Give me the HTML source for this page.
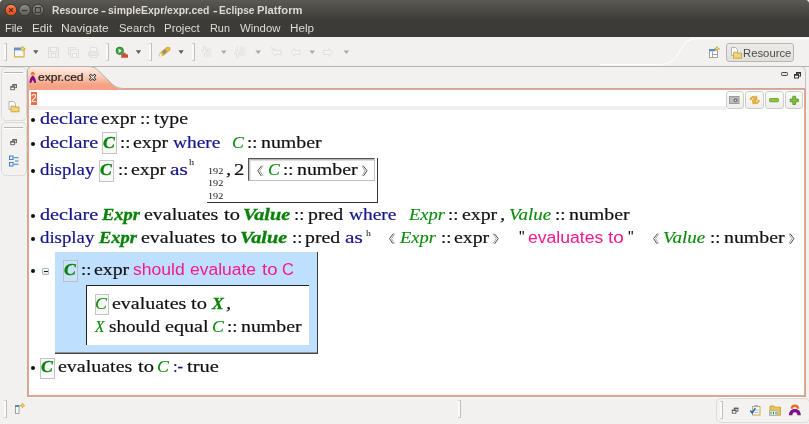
<!DOCTYPE html>
<html><head><meta charset="utf-8"><title>Resource - simpleExpr/expr.ced - Eclipse Platform</title>
<style>
html,body{margin:0;padding:0}
body{width:809px;height:424px;position:relative;overflow:hidden;background:#f2f1f0;font-family:"Liberation Sans",sans-serif}
div{position:absolute;box-sizing:border-box}
.t{position:absolute;white-space:pre;transform-origin:0 0;display:block}
.S,.K{-webkit-text-stroke:0.2px currentColor}
.GB{-webkit-text-stroke:0.3px currentColor}
.tab{-webkit-text-stroke:0.2px currentColor}
.GI{-webkit-text-stroke:0.12px currentColor}
.S{font:normal normal 17px "Liberation Serif",serif;line-height:20px;color:#111}
.K{font:normal normal 17px "Liberation Serif",serif;line-height:20px;color:#14148c}
.GI{font:italic normal 17px "Liberation Serif",serif;line-height:20px;color:#0a8a0a}
.GB{font:italic bold 17px "Liberation Serif",serif;line-height:20px;color:#078207}
.P{font:normal normal 16px "Liberation Sans",sans-serif;line-height:20px;color:#f5198c}
.Q{font:normal normal 16px "Liberation Sans",sans-serif;line-height:20px;color:#111}
.h{font:normal normal 8px "Liberation Serif",serif;line-height:20px;color:#111}
.n{font:normal normal 8.5px "Liberation Serif",serif;line-height:20px;color:#111}
.T{font:normal bold 10.2px "Liberation Sans",sans-serif;line-height:20px;color:#dfdbd2}
.M{font:normal normal 10px "Liberation Sans",sans-serif;line-height:20px;color:#dfdbd2}
.tab{font:normal normal 10.5px "Liberation Sans",sans-serif;line-height:20px;color:#222}
.R{font:normal normal 10.5px "Liberation Sans",sans-serif;line-height:20px;color:#4c4c4c}
.two{font:normal normal 10.5px "Liberation Sans",sans-serif;line-height:20px;color:#fff}

#title{left:0;top:0;width:809px;height:23px;background:linear-gradient(#5a5953,#4b4a45 45%,#3e3d39 85%,#3c3b37)}
#menu{left:0;top:23px;width:809px;height:14px;background:#3c3b37}
#tbline{left:0;top:66px;width:809px;height:1px;background:#b4b2af}
.trim{border:1px solid #dddbd8;border-radius:5px;background:#f3f2f1}
.hl{height:1px;background:#b9b7b4;border-bottom:1px solid #fff;box-sizing:content-box}
.vh{width:3px;box-sizing:border-box;border-right:1px solid #c0bebb;border-top:1px solid #d0cecb;border-bottom:1px solid #d0cecb;background:#fafaf9}
#edsh{left:27px;top:89px;width:779px;height:308px;border:1px solid #c6a99b;border-top:none}
#editor{left:28px;top:89px;width:777px;height:307px;background:#fff;border:1px solid #f4a283}
#edhl{left:27px;top:397px;width:779px;height:1px;background:#fafafa}
#band{left:29px;top:106px;width:697px;height:4px;background:#efefef}
.cb{border:1px solid #c4c4c4;background:#f9f9f9}
.bul{width:4.2px;height:4.2px;border-radius:50%;background:#111}
.mb{border:1px solid #cfcdca;border-radius:3px;background:linear-gradient(#fbfbfa,#efeeec)}
svg{position:absolute;left:0;top:0}
</style></head><body>
<div id="title"></div><div id="menu"></div>
<div id="tbline"></div>
<!-- toolbar handles -->
<div class="vh" style="left:4px;top:43px;height:18px"></div>
<div class="vh" style="left:106px;top:43px;height:18px"></div>
<div class="vh" style="left:149px;top:43px;height:18px"></div>
<div class="vh" style="left:191.500px;top:43px;height:18px"></div>
<!-- perspective button -->
<div style="left:726px;top:43px;width:68px;height:19px;border:1px solid #b9b6b2;border-radius:3px;background:linear-gradient(#eeece9,#e1dfdb)"></div>
<!-- left trims -->
<div class="trim" style="left:1px;top:67px;width:26px;height:54px"></div>
<div class="hl" style="left:4px;top:72px;width:19px"></div>
<div class="trim" style="left:1px;top:122px;width:26px;height:54px"></div>
<div class="hl" style="left:4px;top:127px;width:19px"></div>
<!-- editor -->
<div id="edsh"></div><div id="edhl"></div><div id="editor"></div>
<div id="band"></div>
<div style="left:31px;top:92px;width:6px;height:13px;background:#ea6f48"></div>
<div class="mb" style="left:726px;top:91px;width:18px;height:18px"></div>
<div class="mb" style="left:745px;top:91px;width:19px;height:18px"></div>
<div class="mb" style="left:765px;top:91px;width:19px;height:18px"></div>
<div class="mb" style="left:785px;top:91px;width:18px;height:18px"></div>
<!-- bullets -->
<div class="bul" style="left:30.75px;top:117.65px"></div>
<div class="bul" style="left:30.75px;top:141.65px"></div>
<div class="bul" style="left:30.75px;top:168.65px"></div>
<div class="bul" style="left:30.75px;top:213.65px"></div>
<div class="bul" style="left:30.75px;top:236.65px"></div>
<div class="bul" style="left:31.25px;top:268.55px"></div>
<div class="bul" style="left:30.75px;top:365.65px"></div>
<!-- C boxes -->
<div class="cb" style="left:102px;top:132px;width:15px;height:22px"></div>
<div class="cb" style="left:99px;top:160px;width:15px;height:22px"></div>
<!-- line3 big box: bottom/right borders -->
<div style="left:207px;top:158px;width:171px;height:45px;border-right:1px solid #333;border-bottom:1px solid #333"></div>
<div style="left:248px;top:158px;width:127px;height:23px;border-top:1px solid #555;border-left:1px solid #555;border-bottom:1px solid #bdbdbd;border-right:1px solid #c6c6c6;background:#fff"></div>
<div style="left:249px;top:159px;width:125px;height:21px;border-top:1px solid #b4b4b4;border-left:1px solid #c4c4c4"></div><div style="left:250px;top:160px;width:124px;height:20px;border-top:1px solid #dedede;border-left:1px solid #e6e6e6"></div>
<!-- blue block -->
<div style="left:55px;top:252px;width:263px;height:102px;background:#bfdfff;border-right:1px solid #3a3a3a;border-bottom:1px solid #444"></div><div style="left:55px;top:352px;width:262px;height:1px;background:#8f9296"></div>
<div class="cb" style="left:63px;top:260px;width:15px;height:22px;background:#c9e2fb;border-color:#b9bfc6"></div>
<div style="left:86px;top:285px;width:223px;height:59.5px;background:#fff;border-left:1px solid #222;border-top:1px solid #222"></div>
<div class="cb" style="left:94.5px;top:294px;width:14.5px;height:21px"></div>
<div class="cb" style="left:40px;top:358px;width:14.5px;height:21px"></div>
<!-- collapse icon -->
<div style="left:42px;top:268px;width:7px;height:7px;border:1px solid #a3b9d6;border-radius:1px;background:linear-gradient(#fff,#e4e4e4)"></div>
<div style="left:43.500px;top:270.500px;width:4px;height:1.800px;background:#1c1c1c"></div>
<!-- status trims -->
<div class="vh" style="left:4px;top:400px;height:18px"></div>
<div class="vh" style="left:458px;top:400px;height:18px"></div>
<div class="trim" style="left:716px;top:398px;width:94px;height:25px"></div>
<div class="vh" style="left:720px;top:401px;height:18px"></div>
<svg width="809" height="424" viewBox="0 0 809 424">
<defs>
<linearGradient id="gclose" x1="0" y1="0" x2="0" y2="1"><stop offset="0" stop-color="#f58a5c"/><stop offset="0.5" stop-color="#ec5e2a"/><stop offset="1" stop-color="#e2501c"/></linearGradient>
<linearGradient id="ggray" x1="0" y1="0" x2="0" y2="1"><stop offset="0" stop-color="#8c8b85"/><stop offset="1" stop-color="#5f5e59"/></linearGradient>
<linearGradient id="gtab" x1="0" y1="0" x2="0" y2="1"><stop offset="0" stop-color="#fdeee6"/><stop offset="0.4" stop-color="#f9cfbb"/><stop offset="0.72" stop-color="#f5a98c"/><stop offset="0.8" stop-color="#f4a283"/><stop offset="1" stop-color="#f4a283"/></linearGradient>
<g id="dd"><path d="M0.100 0h5.400l-2.700 3.700z" fill="#606060"/></g>
<g id="ddl"><path d="M0 0h5.6l-2.8 3.6z" fill="#a9a9a9"/></g>
<g id="restore" fill="none" stroke="#5c5c5c" stroke-width="0.9"><rect x="2.500" y="0.700" width="3.600" height="3" fill="#f6f6f6"/><path d="M2.100 0.900h4.400" stroke-width="1.300"/><rect x="0.500" y="2.700" width="3.600" height="3" fill="#fff"/><path d="M0.100 2.900h4.400" stroke-width="1.300"/></g>
<g id="lb" fill="none" stroke="#4c4c4c" stroke-width="1"><path d="M4.700 0.400L0.800 5.400L4.300 10.600"/><path d="M6.100 0.500L2.800 5.400L5.900 10.500" stroke-width="0.600" stroke="#707070"/></g>
<g id="rb" fill="none" stroke="#4c4c4c" stroke-width="1"><path d="M1.500 0.400L5.400 5.400L1.900 10.600"/><path d="M0.100 0.500L3.400 5.400L0.300 10.500" stroke-width="0.600" stroke="#707070"/></g>
<g id="fig"><path d="M1.300 3.600C1.100 1.300 2 0 3 0S4.900 1.300 4.700 3.600C4 2.700 3.500 2.500 3 2.500S2 2.700 1.300 3.600Z" fill="#f26a1b"/><path d="M3 3.300C1.500 4.600 0.200 6.500 0.100 10.600L1.500 10.800L3 7.800L4.500 10.800L5.900 10.600C5.800 6.500 4.500 4.600 3 3.300Z" fill="#7d0e8c"/></g>
</defs>
<!-- window corner -->
<path d="M0 0h3C1.3 0.3 0.3 1.3 0 3z" fill="#f2f1f0"/>
<path d="M809 0h-3c1.7 0.3 2.7 1.3 3 3z" fill="#f2f1f0"/>
<!-- window buttons -->
<circle cx="11" cy="10" r="6.1" fill="#33322e"/><circle cx="11" cy="10" r="5.3" fill="url(#gclose)"/>
<path d="M9.1 8.1l3.8 3.8M12.9 8.1l-3.8 3.8" stroke="#5e2a12" stroke-width="1.3"/>
<circle cx="24.6" cy="10" r="6.1" fill="#33322e"/><circle cx="24.6" cy="10" r="5.3" fill="url(#ggray)"/>
<path d="M22 10.5h5.2" stroke="#3a3935" stroke-width="1.3"/>
<circle cx="37.9" cy="10" r="6.1" fill="#33322e"/><circle cx="37.9" cy="10" r="5.3" fill="url(#ggray)"/>
<rect x="35.4" y="7.6" width="5" height="4.8" fill="#77766f" stroke="#3a3935" stroke-width="1.1"/>
<!-- toolbar curve -->
<path d="M600 64.5H659C670 64.5 674 60 678 54C683 46 686 38.7 696 38.7H809" fill="none" stroke="#fdfdfd" stroke-width="1.2"/>
<!-- new icon -->
<rect x="14.5" y="48.2" width="9.6" height="8.6" fill="#f4f8fd" stroke="#b9a561" stroke-width="1"/>
<rect x="14" y="47.7" width="7.5" height="2.6" fill="#5b93d4"/>
<path d="M24.3 51v6h-10" fill="none" stroke="#e9c84e" stroke-width="1"/>
<path d="M22.6 46.3l0.9 1.7l1.8 0.8l-1.8 0.8l-0.9 1.7l-0.9-1.7l-1.8-0.8l1.8-0.8z" fill="#f8dc6a" stroke="#cf9a1c" stroke-width="0.7"/>
<use href="#dd" x="33" y="50.2"/>
<!-- save (disabled) -->
<g fill="none" stroke="#dedede" stroke-width="1"><rect x="48.5" y="47.5" width="10" height="10" fill="#eeeeee"/><rect x="50.5" y="47.5" width="6" height="4" fill="#f4f4f4"/><rect x="51.5" y="53.5" width="4" height="4" fill="#f4f4f4"/></g>
<g fill="none" stroke="#e0e0e0" stroke-width="1"><rect x="68.5" y="47.5" width="7" height="7" fill="#efefef"/><rect x="70.5" y="49.5" width="8" height="8" fill="#efefef"/><rect x="72.5" y="53.5" width="4" height="4" fill="#f5f5f5"/></g>
<g fill="none" stroke="#e0e0e0" stroke-width="1"><rect x="90.5" y="47.5" width="6" height="4" fill="#f4f4f4"/><rect x="88.5" y="51.5" width="10" height="4.5" rx="1" fill="#e8e8e8"/><rect x="90.5" y="55.5" width="6" height="2" fill="#f4f4f4"/></g>
<!-- run ext tools -->
<circle cx="119.800" cy="50.800" r="3.700" fill="#3aa640" stroke="#1f7f28" stroke-width="0.800"/>
<path d="M118.600 48.700l3.200 2.100l-3.200 2.100z" fill="#fff"/>
<path d="M121.3 54.2h1.3v-1.4h3v1.4h1.6c0.5 0 0.8 0.3 0.8 0.8v2.7h-6.8z" fill="#c9502c"/>
<use href="#dd" x="135.7" y="50.2"/>
<!-- marker -->
<path d="M159 56l1.5-3.2l6.3-5.6l2.9 0.2l0.3 2.6l-6.4 5.3z" fill="#edb92e" stroke="#c88a12" stroke-width="0.6"/>
<path d="M161.8 51.8l3-2.7l2.4 2.5l-3 2.6z" fill="#8f8f8f"/>
<path d="M159 56.3l1.4-3l2 2.2z" fill="#fff8e0"/>
<use href="#dd" x="178.3" y="50.2"/>
<!-- disabled annotations nav -->
<g fill="none" stroke="#dcdcdc" stroke-width="0.9">
<rect x="206" y="47.5" width="5.5" height="9.5" fill="#e9e9e9" stroke="none"/>
<path d="M203.5 46.5h2v4h2l-3 4l-3-4h2z" fill="#f3f3f3"/><path d="M204.5 54.5v2.5"/>
<rect x="240" y="46.5" width="5.5" height="9.5" fill="#e9e9e9" stroke="none"/>
<path d="M238.5 57.5h-2v-4h-2l3-4l3 4h-2z" fill="#f3f3f3"/><path d="M237.5 46.5v1.5"/>
<path d="M275.5 50.5h5.5v4h-5.5v2l-3.5-4l3.5-4z" fill="#f3f3f3"/><path d="M271 47l1 1.3l1.5 0.4l-1.5 0.5l-1 1.3" />
<path d="M294.500 50.500h5.500v4h-5.500v2l-4-4l4-4z" fill="#f3f3f3"/>
<path d="M329 50.500h-5.500v4h5.500v2l4-4l-4-4z" fill="#f3f3f3"/>
</g>
<use href="#ddl" x="221" y="50.4"/><use href="#ddl" x="255.400" y="50.4"/><use href="#ddl" x="309.400" y="50.4"/><use href="#ddl" x="343.600" y="50.4"/>
<!-- open perspective -->
<rect x="709.500" y="49.500" width="8" height="8" fill="#fff" stroke="#9a9a9a" stroke-width="0.9"/>
<rect x="709" y="49" width="6.500" height="2.300" fill="#4f8fd6"/>
<path d="M712.500 51.500v6M712.500 54.500h5" stroke="#9a9a9a" stroke-width="0.9"/>
<path d="M717 46.500l0.800 1.600l1.700 0.700l-1.700 0.700l-0.800 1.600l-0.800-1.600l-1.700-0.700l1.700-0.700z" fill="#f8dc6a" stroke="#cf9a1c" stroke-width="0.700"/>
<!-- resource icon -->
<path d="M731.500 47.500h4l2 2v6h-6z" fill="#fdfdfd" stroke="#9aa3b3" stroke-width="0.8"/>
<path d="M733.500 52.300h3l0.800 0.900h4.200v5h-8z" fill="#f3d57a" stroke="#c79a2a" stroke-width="0.8"/>
<!-- tab -->
<path d="M28 90V71c0-3 1.500-4.500 4.500-4.500H89C94 66.500 97 69 100 72.200L110 82C113.500 85.500 116.500 89 124.500 89H805V90z" fill="url(#gtab)"/>
<path d="M27.500 90V71c0-3 1.500-4.500 4.500-4.500H89C94 66.500 97 69 100 72.200L110 82C113.500 85.500 116.500 88.500 124.500 88.500H805" fill="none" stroke="#b3b1ae" stroke-width="1"/>
<rect x="28" y="89" width="777" height="1" fill="#f4a283"/>
<path d="M799 66.500c4.500 0 6.500 2 6.500 6.500V89" fill="none" stroke="#c4c2bf" stroke-width="1"/>
<use href="#fig" transform="translate(29.400,71.800) scale(1.130,1.030)"/>
<path d="M90.800 75.600l3.600 3.600M94.400 75.600l-3.600 3.600" stroke="#1e1e1e" stroke-width="2.700" stroke-linecap="square"/><path d="M90.800 75.600l3.600 3.600M94.400 75.600l-3.600 3.600" stroke="#fff" stroke-width="1.200" stroke-linecap="square"/>
<!-- min/max -->
<rect x="781.500" y="72.500" width="6" height="3" rx="0.800" fill="#e8e8e8" stroke="#444" stroke-width="1"/>
<g fill="#fff" stroke="#333" stroke-width="1"><rect x="796.500" y="72.500" width="4" height="3.500"/><rect x="794.500" y="74.500" width="4" height="3.500"/></g><path d="M796.500 73h4M794.500 75h4" stroke="#333" stroke-width="1.600"/>
<!-- left trim icons -->
<use href="#restore" x="10.300" y="84"/><use href="#restore" x="10.300" y="139"/>
<path d="M9 101.500h4.500l2 2v6h-6.500z" fill="#fdfdfd" stroke="#9aa3b3" stroke-width="0.8"/>
<path d="M11 106h3l0.800 1h4.200v4.800h-8z" fill="#f3d57a" stroke="#c79a2a" stroke-width="0.8"/>
<g fill="#eaf3fc" stroke="#3d7fc4" stroke-width="1"><rect x="9.500" y="156" width="3.500" height="3.500"/><rect x="9.500" y="162.500" width="3.500" height="3.500"/></g>
<path d="M13.500 157.700h5M13.500 164.200h5M15 161h3.500" stroke="#3d7fc4" stroke-width="1.100"/>
<!-- mini toolbar icons -->
<rect x="729.500" y="96.500" width="9.500" height="7" fill="#bdbdbd" stroke="#9a9a9a" stroke-width="1"/><circle cx="735.500" cy="100.300" r="2" fill="#6a6a6a"/><circle cx="735.500" cy="100.300" r="0.900" fill="#e0e0e0"/>
<path d="M750 99.500c0.500-3 3.500-4 5.500-2.500l1-1.200l0.700 4l-4 -0.300l1.100-1.200c-1.200-0.900-2.500-0.400-2.800 1.200z" fill="#f0b429" stroke="#c98a10" stroke-width="0.500"/>
<path d="M759.500 100.500c-0.500 3-3.500 4-5.500 2.500l-1 1.200l-0.700-4l4 0.300l-1.100 1.200c1.200 0.900 2.500 0.400 2.800-1.200z" fill="#f0b429" stroke="#c98a10" stroke-width="0.500"/>
<rect x="769.500" y="98.500" width="9" height="3.300" rx="0.800" fill="#8fc43c" stroke="#5f9a24" stroke-width="0.800"/>
<path d="M792.800 96.300h2.800v2.700h2.700v2.800h-2.700v2.700h-2.800v-2.700h-2.700v-2.800h2.700z" fill="#7fbf3a" stroke="#4f9422" stroke-width="0.800"/>
<!-- brackets -->
<use href="#lb" x="257" y="165.300"/><use href="#rb" x="361.600" y="165.300"/>
<use href="#lb" x="388.700" y="233.200"/><use href="#rb" x="492.800" y="233.200"/>
<use href="#lb" x="652.800" y="233.200"/><use href="#rb" x="788.500" y="233.200"/>
<!-- status icons -->
<rect x="15.500" y="405.500" width="3.500" height="8" fill="#fff" stroke="#8a8a8a" stroke-width="0.800"/><rect x="15" y="405" width="4.300" height="2" fill="#4f8fd6"/>
<path d="M22.500 403.300l0.700 1.500l1.600 0.700l-1.600 0.700l-0.700 1.500l-0.700-1.500l-1.600-0.700l1.600-0.700z" fill="#f8dc6a" stroke="#cf9a1c" stroke-width="0.700"/>
<use href="#restore" x="731.800" y="407.500"/>
<rect x="752.500" y="406.500" width="7.500" height="8.500" fill="#fbfbfb" stroke="#c9a54a" stroke-width="1"/><rect x="754.500" y="405" width="3.500" height="2.200" fill="#8fb0d8"/><path d="M754.500 410h4M754.500 412.500h4" stroke="#9ab" stroke-width="0.800"/>
<path d="M750.300 410.500l2 2.500l3-4.800" fill="none" stroke="#1d62c4" stroke-width="1.500"/>
<path d="M770 406h4l1 1.200h5.500v8h-10.500z" fill="#e9c25a" stroke="#c39a2c" stroke-width="0.800"/><rect x="769.500" y="411" width="8" height="4.500" fill="#f4f7fb" stroke="#8a9bb5" stroke-width="0.600"/><path d="M771 412v2.500M773.500 412v2.500M776 412v2.500" stroke="#2a7a3a" stroke-width="1"/>
<path d="M790.600 408.500C790.600 405.500 792.500 404.400 794.900 404.400C797.300 404.400 799.200 405.500 799.200 408.500L797 408.800C796.600 407.400 795.800 407 794.900 407C794 407 793.200 407.400 792.800 408.800Z" fill="#f26a1b"/>
<path d="M789 415.300C789 411 791.500 408.900 794.900 408.900C798.300 408.900 800.800 411 800.800 415.300L797.400 415.300C797.400 413.200 796.400 412.300 794.900 412.300C793.400 412.300 792.400 413.200 792.400 415.300Z" fill="#7d0e8c"/>

</svg>
<div id="txt" style="left:0;top:0;width:809px;height:424px;will-change:transform">
<span class="t T" style="left:51.85px;top:1.00px;transform:scaleX(1.0033)">Resource</span>
<span class="t T" style="left:101.24px;top:1.00px;transform:scaleX(1.5200)">-</span>
<span class="t T" style="left:108.49px;top:1.00px;transform:scaleX(1.0235)">simpleExpr/expr.ced</span>
<span class="t T" style="left:212.72px;top:1.00px;transform:scaleX(1.3600)">-</span>
<span class="t T" style="left:219.15px;top:1.00px;transform:scaleX(0.9942)">Eclipse</span>
<span class="t T" style="left:257.07px;top:1.00px;transform:scaleX(1.1000)">Platform</span>
<span class="t M" style="left:4.78px;top:19.00px;transform:scaleX(1.0933)">File</span>
<span class="t M" style="left:31.52px;top:19.00px;transform:scaleX(1.1697)">Edit</span>
<span class="t M" style="left:61.39px;top:19.00px;transform:scaleX(1.2105)">Navigate</span>
<span class="t M" style="left:118.83px;top:19.00px;transform:scaleX(1.1344)">Search</span>
<span class="t M" style="left:163.74px;top:19.00px;transform:scaleX(1.1475)">Project</span>
<span class="t M" style="left:210.38px;top:19.00px;transform:scaleX(1.0882)">Run</span>
<span class="t M" style="left:240.30px;top:19.00px;transform:scaleX(1.1380)">Window</span>
<span class="t M" style="left:290.43px;top:19.00px;transform:scaleX(1.1641)">Help</span>
<span class="t tab" style="left:38.23px;top:66.50px;transform:scaleX(1.1481)">expr.ced</span>
<span class="t R" style="left:743.09px;top:42.80px;transform:scaleX(1.0766)">Resource</span>
<span class="t two" style="left:31.12px;top:88.00px;transform:scaleX(0.9684)">2</span>
<span class="t K" style="left:39.81px;top:109.00px;transform:scaleX(1.1875)">declare</span>
<span class="t S" style="left:101.23px;top:109.00px;transform:scaleX(1.1658)">expr</span>
<span class="t S" style="left:139.93px;top:109.00px;transform:scaleX(1.0963)">::</span>
<span class="t S" style="left:154.01px;top:109.00px;transform:scaleX(1.1579)">type</span>
<span class="t K" style="left:39.81px;top:132.50px;transform:scaleX(1.1875)">declare</span>
<span class="t GB" style="left:102.78px;top:132.50px;transform:scaleX(1.0455)">C</span>
<span class="t S" style="left:120.03px;top:132.50px;transform:scaleX(1.0963)">::</span>
<span class="t S" style="left:133.43px;top:132.50px;transform:scaleX(1.1658)">expr</span>
<span class="t K" style="left:173.40px;top:132.50px;transform:scaleX(1.1415)">where</span>
<span class="t GI" style="left:231.95px;top:132.50px;transform:scaleX(1.0476)">C</span>
<span class="t S" style="left:246.83px;top:132.50px;transform:scaleX(1.0963)">::</span>
<span class="t S" style="left:261.21px;top:132.50px;transform:scaleX(1.1689)">number</span>
<span class="t K" style="left:40.35px;top:160.20px;transform:scaleX(1.1052)">display</span>
<span class="t GB" style="left:99.58px;top:160.20px;transform:scaleX(1.0455)">C</span>
<span class="t S" style="left:117.53px;top:160.20px;transform:scaleX(1.0963)">::</span>
<span class="t S" style="left:130.93px;top:160.20px;transform:scaleX(1.1658)">expr</span>
<span class="t K" style="left:169.57px;top:160.20px;transform:scaleX(1.2538)">as</span>
<span class="t h" style="left:189.48px;top:153.20px;transform:scaleX(1.2800)">h</span>
<span class="t n" style="left:207.70px;top:161.00px;transform:scaleX(1.2000)">192</span>
<span class="t n" style="left:207.70px;top:173.40px;transform:scaleX(1.2000)">192</span>
<span class="t n" style="left:207.70px;top:186.00px;transform:scaleX(1.2000)">192</span>
<span class="t S" style="left:226.07px;top:160.20px;transform:scaleX(1.2400)">,</span>
<span class="t S" style="left:234.09px;top:160.20px;transform:scaleX(1.2148)">2</span>
<span class="t GI" style="left:267.75px;top:160.20px;transform:scaleX(1.0476)">C</span>
<span class="t S" style="left:282.83px;top:160.20px;transform:scaleX(1.0963)">::</span>
<span class="t S" style="left:296.51px;top:160.20px;transform:scaleX(1.1689)">number</span>
<span class="t K" style="left:40.11px;top:205.00px;transform:scaleX(1.1875)">declare</span>
<span class="t GB" style="left:102.20px;top:205.00px;transform:scaleX(1.0857)">Expr</span>
<span class="t S" style="left:144.32px;top:205.00px;transform:scaleX(1.1742)">evaluates</span>
<span class="t S" style="left:224.20px;top:205.00px;transform:scaleX(1.2000)">to</span>
<span class="t GB" style="left:243.01px;top:205.00px;transform:scaleX(1.1895)">Value</span>
<span class="t S" style="left:294.43px;top:205.00px;transform:scaleX(1.0963)">::</span>
<span class="t S" style="left:308.11px;top:205.00px;transform:scaleX(1.1630)">pred</span>
<span class="t K" style="left:348.70px;top:205.00px;transform:scaleX(1.1415)">where</span>
<span class="t GI" style="left:408.87px;top:205.00px;transform:scaleX(1.0887)">Expr</span>
<span class="t S" style="left:448.23px;top:205.00px;transform:scaleX(1.0963)">::</span>
<span class="t S" style="left:461.73px;top:205.00px;transform:scaleX(1.1658)">expr</span>
<span class="t S" style="left:500.47px;top:205.00px;transform:scaleX(1.2400)">,</span>
<span class="t GI" style="left:508.68px;top:205.00px;transform:scaleX(1.1205)">Value</span>
<span class="t S" style="left:555.43px;top:205.00px;transform:scaleX(1.0963)">::</span>
<span class="t S" style="left:569.41px;top:205.00px;transform:scaleX(1.1689)">number</span>
<span class="t K" style="left:40.25px;top:228.00px;transform:scaleX(1.1052)">display</span>
<span class="t GB" style="left:99.40px;top:228.00px;transform:scaleX(1.0857)">Expr</span>
<span class="t S" style="left:141.32px;top:228.00px;transform:scaleX(1.1742)">evaluates</span>
<span class="t S" style="left:221.10px;top:228.00px;transform:scaleX(1.2000)">to</span>
<span class="t GB" style="left:240.01px;top:228.00px;transform:scaleX(1.1895)">Value</span>
<span class="t S" style="left:291.63px;top:228.00px;transform:scaleX(1.0963)">::</span>
<span class="t S" style="left:305.31px;top:228.00px;transform:scaleX(1.1630)">pred</span>
<span class="t K" style="left:345.17px;top:228.00px;transform:scaleX(1.2538)">as</span>
<span class="t h" style="left:365.69px;top:224.30px;transform:scaleX(1.2267)">h</span>
<span class="t GI" style="left:400.27px;top:228.00px;transform:scaleX(1.0887)">Expr</span>
<span class="t S" style="left:440.53px;top:228.00px;transform:scaleX(1.0963)">::</span>
<span class="t S" style="left:453.83px;top:228.00px;transform:scaleX(1.1658)">expr</span>
<span class="t Q" style="left:518.56px;top:228.00px;transform:scaleX(0.9882)">&quot;</span>
<span class="t P" style="left:527.88px;top:228.00px;transform:scaleX(1.0989)">evaluates</span>
<span class="t P" style="left:607.90px;top:228.00px;transform:scaleX(1.1840)">to</span>
<span class="t Q" style="left:628.06px;top:228.00px;transform:scaleX(0.9882)">&quot;</span>
<span class="t GI" style="left:663.48px;top:228.00px;transform:scaleX(1.1205)">Value</span>
<span class="t S" style="left:709.63px;top:228.00px;transform:scaleX(1.0963)">::</span>
<span class="t S" style="left:724.01px;top:228.00px;transform:scaleX(1.1689)">number</span>
<span class="t GB" style="left:63.68px;top:260.40px;transform:scaleX(1.0455)">C</span>
<span class="t S" style="left:80.83px;top:260.40px;transform:scaleX(1.0963)">::</span>
<span class="t S" style="left:94.03px;top:260.40px;transform:scaleX(1.1658)">expr</span>
<span class="t P" style="left:133.05px;top:260.40px;transform:scaleX(1.0973)">should</span>
<span class="t P" style="left:189.88px;top:260.40px;transform:scaleX(1.0915)">evaluate</span>
<span class="t P" style="left:261.71px;top:260.40px;transform:scaleX(1.1600)">to</span>
<span class="t P" style="left:282.03px;top:260.40px;transform:scaleX(1.0244)">C</span>
<span class="t GI" style="left:95.15px;top:294.20px;transform:scaleX(1.0476)">C</span>
<span class="t S" style="left:111.92px;top:294.20px;transform:scaleX(1.1742)">evaluates</span>
<span class="t S" style="left:191.40px;top:294.20px;transform:scaleX(1.2000)">to</span>
<span class="t GB" style="left:211.62px;top:294.20px;transform:scaleX(1.0367)">X</span>
<span class="t S" style="left:226.27px;top:294.20px;transform:scaleX(1.2400)">,</span>
<span class="t GI" style="left:95.25px;top:317.00px;transform:scaleX(0.9043)">X</span>
<span class="t S" style="left:108.56px;top:317.00px;transform:scaleX(1.1236)">should</span>
<span class="t S" style="left:165.11px;top:317.00px;transform:scaleX(1.1832)">equal</span>
<span class="t GI" style="left:212.05px;top:317.00px;transform:scaleX(1.0476)">C</span>
<span class="t S" style="left:227.33px;top:317.00px;transform:scaleX(1.0963)">::</span>
<span class="t S" style="left:240.91px;top:317.00px;transform:scaleX(1.1689)">number</span>
<span class="t GB" style="left:40.78px;top:357.30px;transform:scaleX(1.0455)">C</span>
<span class="t S" style="left:58.32px;top:357.30px;transform:scaleX(1.1742)">evaluates</span>
<span class="t S" style="left:138.00px;top:357.30px;transform:scaleX(1.2000)">to</span>
<span class="t GI" style="left:156.95px;top:357.30px;transform:scaleX(1.0476)">C</span>
<span class="t K" style="left:172.68px;top:357.30px;transform:scaleX(0.9765)">:-</span>
<span class="t S" style="left:186.70px;top:357.30px;transform:scaleX(1.2000)">true</span>
</div>
</body></html>
